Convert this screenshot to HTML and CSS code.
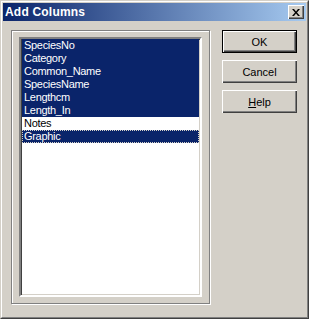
FILE: index.html
```html
<!DOCTYPE html>
<html>
<head>
    <title>Add Columns</title>
    <link rel="stylesheet" href="styles.css">
</head>
<body>
    <div class="window">
        <div class="frame">
            <div class="titlebar">
                <span class="title">Add Columns</span>
                <div class="close">
                    <svg width="8" height="7" viewBox="0 0 8 7">
                        <path d="M0 0h2l2 2.5L6 0h2L5 3.5 8 7H6L4 4.5 2 7H0l3-3.5z" fill="#000"/>
                    </svg>
                </div>
            </div>
            <div class="content">
                <div class="group">
                    <div class="listbox">
                        <div class="item selected">SpeciesNo</div>
                        <div class="item selected">Category</div>
                        <div class="item selected">Common_Name</div>
                        <div class="item selected">SpeciesName</div>
                        <div class="item selected">Lengthcm</div>
                        <div class="item selected">Length_In</div>
                        <div class="item">Notes</div>
                        <div class="item selected focused">Graphic</div>
                    </div>
                </div>
                <div class="buttons">
                    <div class="button default">OK</div>
                    <div class="button">Cancel</div>
                    <div class="button"><u>H</u>elp</div>
                </div>
            </div>
        </div>
    </div>
</body>
</html>
```

FILE: styles.css
```css
body {
    margin: 0;
    font-family: "Liberation Sans", Arial, sans-serif;
    font-size: 11px;
    background-color: #d4d0c8;
}
.window {
    width: 309px;
    height: 319px;
    box-sizing: border-box;
    border: 1px solid;
    border-color: #d4d0c8 #404040 #404040 #d4d0c8;
    background-color: #d4d0c8;
}
.frame {
    height: 100%;
    box-sizing: border-box;
    border: 1px solid;
    border-color: #fff #808080 #808080 #fff;
    padding: 1px;
}
.titlebar {
    height: 18px;
    display: flex;
    align-items: center;
    justify-content: space-between;
    background: linear-gradient(to right, #0a246a, #a6caf0);
    padding-left: 2px;
}
.title {
    color: #fff;
    font-weight: bold;
    font-size: 12px;
    letter-spacing: 0.2px;
}
.close {
    width: 16px;
    height: 14px;
    margin-right: 2px;
    box-sizing: border-box;
    display: flex;
    align-items: center;
    justify-content: center;
    background-color: #d4d0c8;
    box-shadow: inset 1px 1px 0 #fff, inset -1px -1px 0 #404040, inset -2px -2px 0 #808080;
}
.content {
    display: flex;
    align-items: flex-start;
    padding: 9px 0 0 8px;
}
.group {
    width: 199px;
    height: 274px;
    box-sizing: border-box;
    border: 1px solid #808080;
    box-shadow: 1px 1px 0 #fff, inset 1px 1px 0 #fff;
    padding: 6px 7px;
}
.listbox {
    height: 100%;
    box-sizing: border-box;
    border: 2px solid;
    border-color: #808080 #fff #fff #808080;
    box-shadow: inset 1px 1px 0 #404040, inset -1px -1px 0 #d4d0c8;
    background-color: #fff;
    padding: 0 1px;
}
.item {
    height: 13px;
    line-height: 13px;
    padding-left: 2px;
    color: #000;
    white-space: nowrap;
    letter-spacing: -0.3px;
}
.item.selected {
    background-color: #0a246a;
    color: #fff;
}
.item.focused {
    outline: 1px dotted #d4d0c8;
    outline-offset: -1px;
}
.buttons {
    margin-left: 12px;
    display: flex;
    flex-direction: column;
    gap: 7px;
}
.button {
    width: 75px;
    height: 23px;
    box-sizing: border-box;
    display: flex;
    align-items: center;
    justify-content: center;
    color: #000;
    background-color: #d4d0c8;
    box-shadow: inset 1px 1px 0 #fff, inset -1px -1px 0 #404040, inset -2px -2px 0 #808080;
}
.button.default {
    border: 1px solid #000;
}
```
